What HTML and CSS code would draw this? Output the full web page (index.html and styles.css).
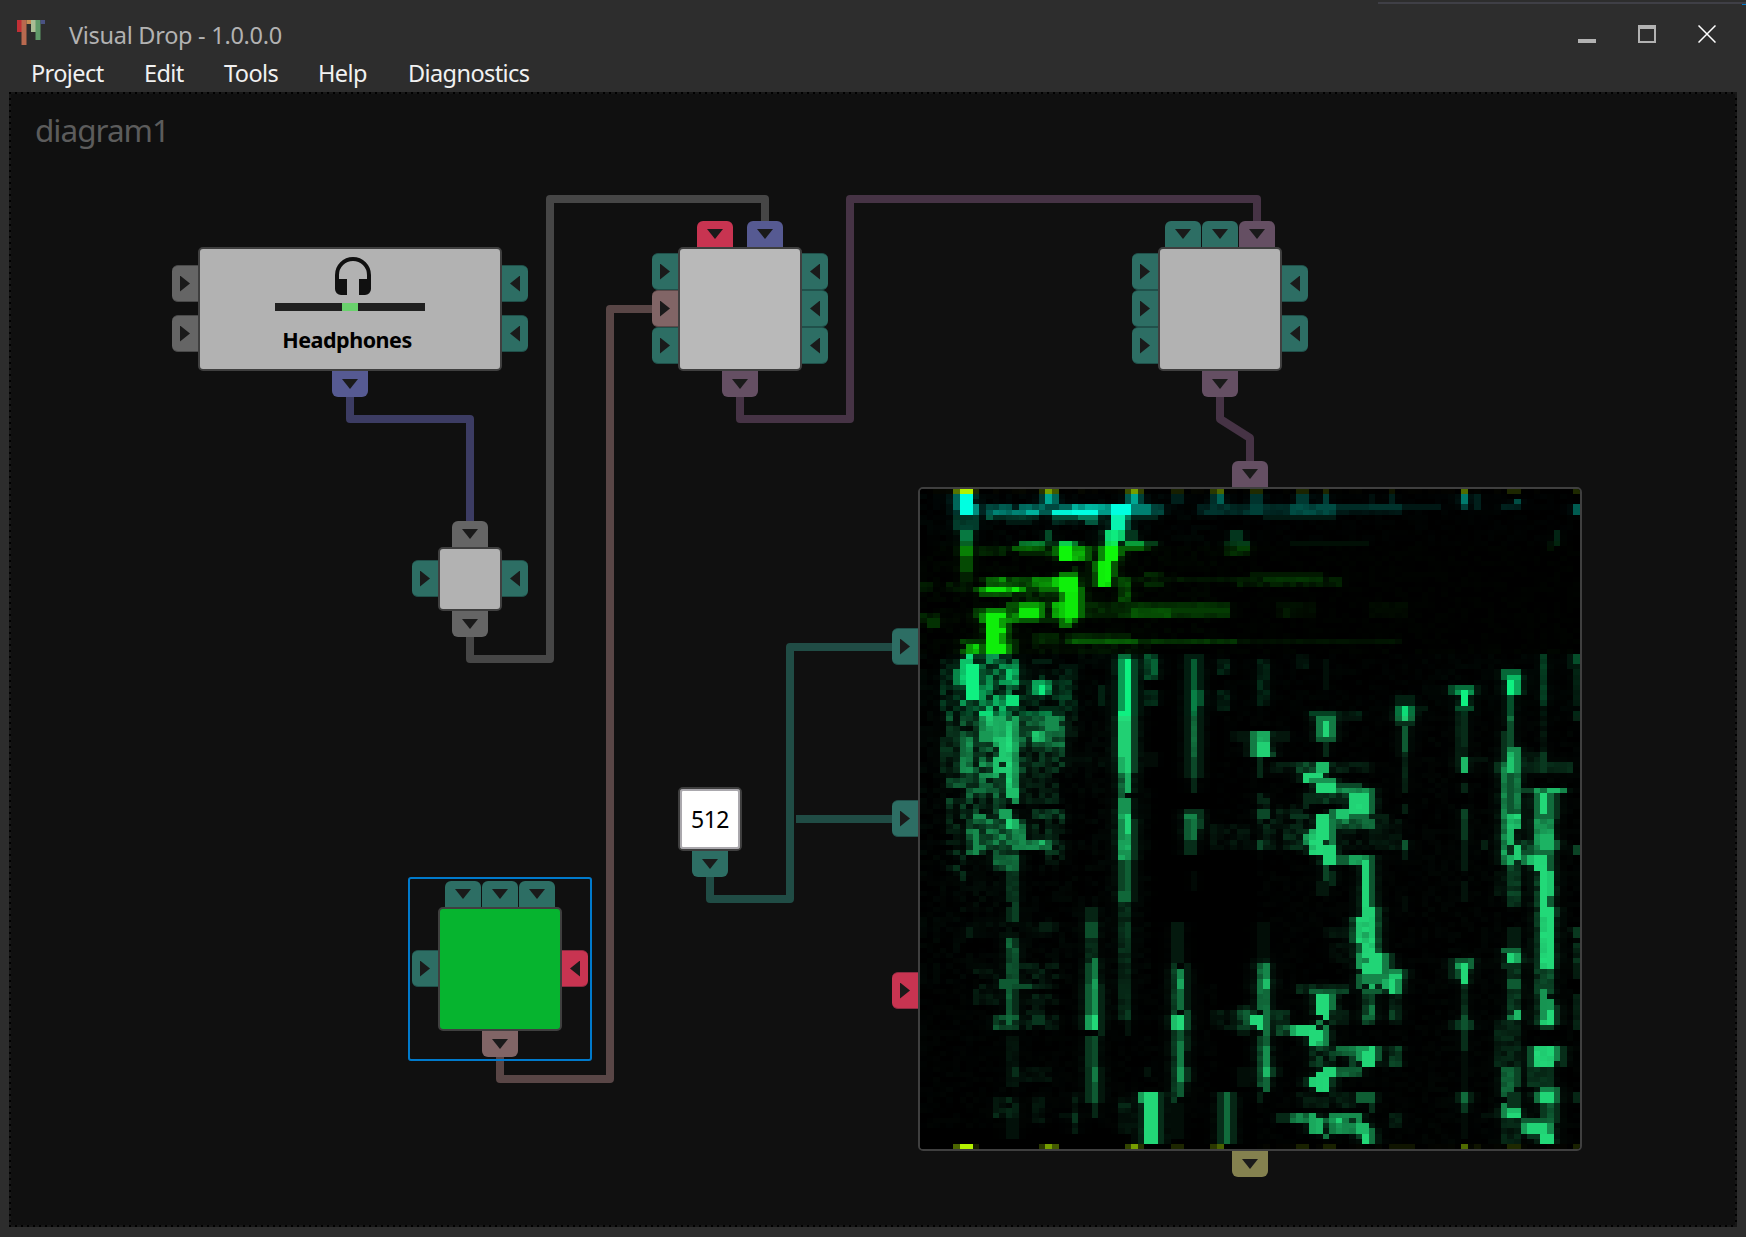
FILE: index.html
```html
<!DOCTYPE html>
<html lang="en">
<head>
<meta charset="utf-8">
<title>Visual Drop - 1.0.0.0</title>
<link rel="stylesheet" href="styles.css">
</head>
<body>
<div class="window">
  <div class="top-edge"></div>
  <header class="titlebar">
    <svg class="logo" width="28" height="26" viewBox="0 0 28 26">
      <rect x="0" y="0" width="5" height="12" fill="#c12f35"/>
      <rect x="4.5" y="0" width="5" height="25" fill="#b9694f"/>
      <rect x="9.500" y="0" width="4.500" height="4" fill="#c68b54"/>
      <rect x="14" y="0" width="5" height="12" fill="#a9bd94"/>
      <rect x="18.500" y="0" width="5" height="20" fill="#5f9a69"/>
      <rect x="23.500" y="0" width="4.500" height="4" fill="#4a5283"/>
    </svg>
    <span class="title">Visual Drop - 1.0.0.0</span>
    <div class="controls">
      <svg width="18" height="18"><rect y="14" width="18" height="4" fill="#b2b2b2"/></svg>
      <svg width="18" height="18"><path d="M0 0H18V18H0ZM2 4V16H16V4Z" fill="#b2b2b2" fill-rule="evenodd"/></svg>
      <svg width="18" height="18"><path d="M.5 .5L17.500 17.500M17.500 .5L.5 17.500" stroke="#fff" stroke-width="1.500"/></svg>
    </div>
  </header>
  <nav class="menu">
    <span>Project</span><span>Edit</span><span>Tools</span><span>Help</span><span class="wide">Diagnostics</span>
  </nav>
  <main class="board">
    <h1 class="name">diagram1</h1>
    <svg class="wires" width="1746" height="1237" viewBox="0 0 1746 1237">
      <path d="M350 395V419H470V523" stroke="#3c3c63"/>
      <path d="M470 635V659H550V199H765V223" stroke="#464646"/>
      <path d="M740 395V419H850V199H1257V223" stroke="#463345"/>
      <path d="M1220 395V419L1250 438V463" stroke="#463345"/>
      <path d="M500 1055V1079H610V309H654" stroke="#594646"/>
      <path d="M710 875V899H790V647H894M796 819H894" stroke="#204c45"/>
    </svg>

    <section class="node n-audio">
      <div class="rail left gap13"><i class="port grey"></i><i class="port grey"></i></div>
      <div class="rail right gap13"><i class="port"></i><i class="port"></i></div>
      <div class="rail bottom"><i class="port blue"></i></div>
      <div class="body audio">
        <svg class="phones" width="36" height="38" viewBox="0 0 36 38"><path d="M0 18A18 18 0 0 1 36 18V32A6 6 0 0 1 30 38H24V22H32V18A14 14 0 0 0 4 18V22H12V38H6A6 6 0 0 1 0 32Z" fill="#101010"/></svg>
        <div class="meter"><div class="level"></div></div>
        <span class="label">Headphones</span>
      </div>
    </section>

    <section class="node n-small">
      <div class="rail top"><i class="port grey"></i></div>
      <div class="rail left"><i class="port"></i></div>
      <div class="rail right"><i class="port"></i></div>
      <div class="rail bottom"><i class="port grey"></i></div>
      <div class="body"></div>
    </section>

    <section class="node n-mix">
      <div class="rail top gap14"><i class="port red"></i><i class="port blue"></i></div>
      <div class="rail left"><i class="port"></i><i class="port brown"></i><i class="port"></i></div>
      <div class="rail right"><i class="port"></i><i class="port"></i><i class="port"></i></div>
      <div class="rail bottom"><i class="port purple"></i></div>
      <div class="body light"></div>
    </section>

    <section class="node n-out">
      <div class="rail top"><i class="port"></i><i class="port"></i><i class="port purple"></i></div>
      <div class="rail left"><i class="port"></i><i class="port"></i><i class="port"></i></div>
      <div class="rail right gap13"><i class="port"></i><i class="port"></i></div>
      <div class="rail bottom"><i class="port purple"></i></div>
      <div class="body"></div>
    </section>

    <section class="node n-number">
      <div class="rail bottom"><i class="port"></i></div>
      <div class="body number">512</div>
    </section>

    <section class="node n-color">
      <div class="rail top"><i class="port"></i><i class="port"></i><i class="port"></i></div>
      <div class="rail left"><i class="port"></i></div>
      <div class="rail right"><i class="port red"></i></div>
      <div class="rail bottom"><i class="port brown"></i></div>
      <div class="body green"></div>
      <div class="selection"></div>
    </section>

    <section class="node n-view">
      <div class="rail top"><i class="port purple"></i></div>
      <div class="rail left gap135"><i class="port"></i><i class="port"></i><i class="port red"></i></div>
      <div class="rail bottom"><i class="port olive"></i></div>
      <div class="body view"><canvas id="bitmap" width="660" height="660"></canvas></div>
    </section>
  </main>
</div>
<script src="bitmap.js"></script>
</body>
</html>
```
FILE: styles.css
```css
* { box-sizing: border-box; }
body { margin: 0; background: #2d2d2d; font-family: "Noto Sans", "Open Sans", sans-serif; }
.window { position: relative; width: 1746px; height: 1237px; overflow: hidden; display: flex; flex-direction: column; background: #2d2d2d; }
.top-edge { position: absolute; top: 2px; right: 0; width: 368px; height: 2px; background: #3f3f46; }
.top-edge::after { content: ""; position: absolute; right: 0; top: 2px; width: 4px; height: 1px; background: #007acc; }
.titlebar { flex: none; height: 57px; display: flex; align-items: flex-start; padding: 20px 30px 0 17px; }
.logo { flex: none; }
.title { margin-left: 24px; color: #b2b2b2; font-size: 23.500px; line-height: 30px; letter-spacing: -0.280px; white-space: nowrap; }
.controls { margin-left: auto; padding-top: 5px; display: flex; gap: 42px; }
.menu { flex: none; height: 35px; display: grid; grid-template-columns: 113px 80px 94px 90px 200px; padding-left: 31px; color: #f1f1f1; font-size: 23.500px; line-height: 33px; letter-spacing: -0.600px; white-space: nowrap; }
.board { flex: none; position: relative; width: 1728px; height: 1135px; margin-left: 9px; background:
  repeating-linear-gradient(90deg, #000 0 2px, #161616 2px 6px) 0 0 / 100% 2px no-repeat,
  repeating-linear-gradient(90deg, #000 0 2px, #161616 2px 6px) 0 100% / 100% 2px no-repeat,
  repeating-linear-gradient(#000 0 2px, #161616 2px 6px) 0 0 / 2px 100% no-repeat,
  repeating-linear-gradient(#000 0 2px, #161616 2px 6px) 100% 0 / 2px 100% no-repeat, #101010; }
.name { margin: 0; padding: 15px 0 0 26px; color: #5c5c5c; font-size: 31.500px; font-weight: 400; line-height: 46px; letter-spacing: -1px; }
.wires { position: absolute; left: -9px; top: -92px; fill: none; stroke-width: 8; stroke-linejoin: round; }

.node { position: absolute; width: 124px; height: 124px; }
.n-audio { left: 189px; top: 155px; width: 304px; }
.n-small { left: 429px; top: 455px; width: 64px; height: 64px; }
.n-mix { left: 669px; top: 155px; }
.n-out { left: 1149px; top: 155px; }
.n-number { left: 669px; top: 695px; width: 64px; height: 64px; }
.n-color { left: 429px; top: 815px; }
.n-view { left: 909px; top: 395px; width: 664px; height: 664px; }
.body { width: 100%; height: 100%; border: 2px solid #3f3f3f; border-radius: 5px; background: #b2b2b2; overflow: hidden; }
.light { background: #b9b9b9; }
.green { background: #06b42f; }
.audio { display: flex; flex-direction: column; align-items: center; padding-top: 8px; }
.phones { flex: none; margin-left: 6px; }
.meter { width: 150px; height: 8px; margin-top: 8px; background: #202020; flex: none; }
.level { width: 16px; height: 8px; margin-left: 67px; background: #6ad26d; }
.label { margin: 14px 6px 0 0; color: #000; font-size: 21.500px; font-weight: 700; line-height: 30px; letter-spacing: -0.480px; }
.number { display: flex; align-items: center; justify-content: center; background: #fff; box-shadow: inset 0 0 0 2px #aaa8ad; font-size: 23px; letter-spacing: -0.500px; line-height: 30px; color: #000; }
.view { background: #000; }
.view canvas { display: block; }
.selection { position: absolute; left: -30px; top: -30px; width: 184px; height: 184px; border: 2px solid #007acc; border-radius: 3px; }

.rail { position: absolute; display: flex; justify-content: center; }
.left, .right { top: 0; bottom: 1px; width: 26px; flex-direction: column; }
.left { right: 100%; }
.right { left: 100%; }
.top, .bottom { left: 0; right: 0; height: 26px; gap: 1px; }
.top { bottom: 100%; }
.bottom { top: 100%; }
.gap13 { gap: 13px; }
.gap14 { gap: 14px; }
.gap135 { gap: 135px; }
.port { --c: #2d6e64; --edge: #20504a; flex: none; width: 36px; height: 26px; background: var(--c); display: flex; align-items: center; justify-content: center; }
.port::before { content: ""; width: 16px; height: 10px; background: #1a1a1a; clip-path: polygon(0 0, 100% 0, 50% 100%); }
.left .port, .right .port { width: 26px; height: 37px; border: solid var(--edge); border-width: 1px 0; }
.left .port::before, .right .port::before { width: 10px; height: 16px; clip-path: polygon(0 0, 100% 50%, 0 100%); }
.right .port::before { clip-path: polygon(100% 0, 0 50%, 100% 100%); }
.left .port { border-radius: 6px 0 0 6px; }
.right .port { border-radius: 0 6px 6px 0; }
.top .port { border-radius: 6px 6px 0 0; }
.bottom .port { border-radius: 0 0 6px 6px; }
.port.grey { --c: #656565; --edge: #494949; }
.port.blue { --c: #565a92; }
.port.red { --c: #c83451; --edge: #8b2a40; }
.port.brown { --c: #816566; --edge: #5c4949; }
.port.purple { --c: #654f63; }
.port.olive { --c: #84814f; }
```
FILE: bitmap.js
```js
// Spectral bitmap: 100 columns by 128 rows of intensities, tinted row by row.
const COLS = 100, ROWS = 128, CW = 6.6, CH = 660 / 128;
const cells = new Float32Array(COLS * ROWS);

function noise(x, y) {
  const s = Math.sin(x * 127.1 + y * 311.7) * 43758.5453;
  return s - Math.floor(s);
}

// Patches are "x1 y1 x2 y2 level jitter", in thirds of a pixel from the block's origin.
function block(ox, oy, data) {
  for (const line of data.trim().split(/[;\n]+/)) {
    const [x1, y1, x2, y2, level, jitter = 0] = line.trim().split(/\s+/).map(Number);
    const c1 = Math.max(0, Math.round((ox + x1 / 3) / CW));
    const c2 = Math.min(COLS, Math.round((ox + x2 / 3) / CW));
    const r1 = Math.max(0, Math.round((oy + y1 / 3) / CH));
    const r2 = Math.min(ROWS, Math.round((oy + y2 / 3) / CH));
    for (let r = r1; r < r2; r++) for (let c = c1; c < c2; c++) {
      cells[r * COLS + c] = Math.max(0, level + (noise(c, r) - 0.5) * jitter / 50);
    }
  }
}

function tint(r) {
  if (r === 0 || r === 127) return [190, 255, 0];
  if (r < 5) return [0, 255, 225];
  if (r < 8) return [8, 248, 180];
  if (r < 10) return [14, 242, 130];
  if (r < 11) return [14, 242, 90];
  if (r < 32) return [15, 245, 10];
  if (r < 44) return [15, 245, 132];
  return [35, 224, 124];
}

// faint haze
block(0, 0, `
0 0 900 480 .01 2
900 0 1980 480 .004 1
0 480 700 1480 .01 3
900 480 1500 1000 .004 1.5
1500 480 1980 1980 .008 2
1000 1000 1500 1980 .006 1.5
0 1480 900 1920 .006 1.5`);

// upper left
block(-20, -19, `
158 57 180 72 .45; 180 57 220 72 .95; 220 57 236 72 .15
418 57 436 72 .2; 436 57 458 72 .62; 458 57 474 72 .35
675 57 693 72 .3; 693 57 715 72 .62; 715 57 730 72 .25
810 57 850 72 .12; 930 57 950 72 .22; 950 57 970 72 .4
158 72 180 117 .4; 158 117 180 132 .2; 180 72 218 132 1; 218 102 236 132 .55
418 72 436 102 .22; 436 72 458 102 .65; 458 72 474 102 .4
675 72 693 102 .35; 693 72 715 102 .65; 715 72 730 102 .25
810 72 850 102 .12; 930 72 950 102 .18; 950 72 970 102 .38
258 102 340 117 .28 8; 356 102 436 117 .4 8; 436 102 474 117 .28; 474 102 514 117 .4; 514 102 635 117 .62 10
258 117 278 147 .35; 278 117 378 132 .45 8; 378 117 418 132 .7; 418 117 454 132 .35; 454 117 514 132 .95; 514 117 593 132 1; 593 117 635 132 .6
635 102 693 132 1; 693 102 750 132 .5; 750 102 800 132 .27 5; 693 132 770 147 .15; 890 102 1050 132 .15 6
278 132 420 147 .2 5; 454 132 535 147 .3; 535 132 593 147 .5; 555 147 593 163 .35; 320 147 400 163 .1; 454 147 540 163 .15 8
635 132 673 180 .98; 673 132 693 180 .5; 673 147 693 180 .32
160 132 236 180 .22 2; 180 163 218 180 .26; 180 180 218 210 .5; 180 210 218 225 .4; 180 225 218 258 .52; 180 258 218 302 .3; 180 302 218 335 .13
436 180 458 225 .3; 356 210 436 225 .5 5; 340 225 436 242 .38 6; 236 225 320 258 .13 5; 356 242 436 258 .14
436 210 474 258 .15 8; 474 210 514 225 .85; 514 210 540 225 .5; 474 225 514 273 1; 514 225 555 273 .7 8; 555 225 573 273 .35; 454 225 474 258 .42
613 180 635 225 .9; 635 180 658 225 .97; 658 180 673 210 .85; 673 180 715 210 .22; 675 210 735 225 .65; 675 225 735 240 .38; 735 210 775 225 .25; 735 225 755 240 .18; 658 210 673 225 .12
613 225 658 273 1; 595 225 613 273 .55; 595 273 613 347 .97; 613 273 635 335 1; 635 273 658 318 .35; 575 273 595 335 .42; 658 225 673 258 .4; 573 302 595 347 .3; 613 335 635 347 .9; 635 318 658 347 .16; 658 318 690 395 .26 8
510 288 535 302 .15
60 335 105 363 .1 3; 140 335 218 363 .08 4; 236 318 260 335 .14; 258 318 320 347 .45 15; 320 318 436 347 .3 8; 396 318 454 347 .55 7; 454 318 474 347 .82; 474 318 538 363 .98; 474 302 538 318 .52
220 347 240 363 .3; 240 347 258 363 .6; 258 347 316 363 .93; 316 347 340 363 .7; 340 347 356 363 .95; 356 347 378 363 .62; 378 347 418 363 .22; 418 347 474 363 .45
240 363 338 378 .33 4; 338 363 474 395 .12 9; 474 363 494 395 .52; 494 363 538 440 .95; 538 347 555 440 .42; 474 395 494 440 .82; 474 440 516 470 .45; 516 440 538 457 .4; 494 440 514 457 .75
320 395 356 440 .32 12; 356 410 418 440 .95; 356 395 418 410 .65; 418 395 436 440 .5; 454 395 474 440 .7 8; 356 440 418 457 .36; 418 440 474 457 .16; 555 395 680 440 .15 5
220 410 258 440 .28 12; 236 425 258 457 .55; 258 410 316 425 .55; 258 425 316 549 .97; 300 440 316 470 .65; 300 485 316 518 .65; 316 425 356 457 .48 10; 316 457 338 520 .28 8
60 425 120 457 .12 4; 80 440 120 473 .2; 120 440 220 457 .04 3
180 503 258 518 .26 8; 198 518 236 549 .75 15; 180 533 198 549 .35; 236 518 258 549 .38; 316 518 338 549 .5; 338 503 356 549 .16
394 490 480 518 .17 7; 490 503 1050 518 .2 4; 516 503 715 518 .36 3; 500 490 700 503 .14 4; 400 518 750 549 .06 4
735 302 800 347 .14 5; 690 318 1050 335 .08 3; 1020 318 1050 347 .12; 680 395 1000 440 .19 3; 690 410 810 440 .32 3; 810 410 990 425 .24
975 210 1050 255 .15 5; 1000 180 1040 225 .22
120 570 180 720 .12 12; 180 570 356 720 .32 22; 356 600 540 720 .11 11; 180 549 338 705 .38 26; 198 549 218 582 .9; 180 568 218 640 .82 5; 198 582 236 690 .98; 160 600 180 640 .55; 236 643 258 705 .58 10; 258 549 278 582 .6
316 582 356 643 .58 20; 320 597 338 628 .82; 316 675 356 705 .92; 278 675 300 705 .72; 300 705 340 720 .6; 396 628 454 675 .6 15; 418 643 436 675 .95; 474 628 514 705 .2 10
220 568 236 582 0; 258 582 278 597 0; 278 660 300 675 0; 340 660 356 675 .05; 300 643 316 660 .08
140 705 236 950 .24 20; 236 705 356 950 .45 32; 356 720 494 830 .36 22; 494 720 540 820 .07 8; 120 800 180 915 .14 10
180 800 218 915 .55 12; 236 720 278 735 .9; 258 735 316 810 .82 10; 236 782 278 810 .68; 338 750 356 1000 .7 10; 316 750 338 980 .93 8; 300 815 316 910 .9; 278 860 300 905 .86; 316 955 356 983 .85; 396 782 436 815 .82 8
356 830 494 915 .16 17; 430 740 474 780 .62; 494 850 620 900 .04 3; 356 915 474 1000 .09 10
198 925 316 985 .32 22; 140 985 320 1080 .16 18; 220 1030 258 1080 .62; 300 1015 340 1045 .72; 316 1045 356 1080 .85; 396 1015 494 1080 .2 14
340 660 356 675 0; 160 720 180 735 0; 198 765 220 780 0; 418 720 436 735 .5; 220 830 236 845 0; 300 875 316 890 0; 258 845 278 860 .1
400 560 454 582 .12; 474 582 535 597 .08; 595 645 615 705 .13
652 549 693 568 .45; 654 568 673 720 .63; 673 568 693 735 .98; 693 568 714 910 .28; 636 630 654 735 .09; 654 720 693 750 .98; 636 750 654 880 .12; 654 750 693 860 .93; 654 860 673 910 .78; 673 860 693 910 .93; 654 910 673 980 .42 7; 673 910 693 970 .78; 654 980 693 1030 .65; 654 1030 673 1080 .75; 673 1030 693 1080 .95
735 549 775 628 .28 8; 750 568 770 612 .4; 735 660 775 705 .15 5; 735 850 775 900 .05
852 549 912 720 .12; 870 568 890 660 .38; 870 660 890 720 .52; 890 660 912 705 .34; 852 720 912 920 .12; 870 720 890 860 .46 5; 870 860 890 925 .32; 870 925 890 970 .17; 852 1015 912 1080 .22; 852 1030 890 1080 .58
950 568 990 612 .12 5; 950 660 990 720 .1 5; 995 785 1050 820 .1 5`);

// upper right
block(320, -19, `
30 57 70 72 .17; 168 57 205 72 .14; 248 57 270 72 .15; 445 57 470 72 .08; 662 57 684 72 .42; 805 57 845 72 .15; 1003 57 1020 72 .16
30 72 70 102 .2; 168 72 205 102 .22; 248 72 270 102 .24; 390 72 405 102 .06; 445 72 470 102 .12; 662 72 684 102 .48; 662 102 684 117 .24; 705 72 722 117 .12; 780 102 845 125 .12 4; 820 87 842 102 .3; 1003 102 1020 132 .36
0 102 150 132 .16 5; 30 102 70 132 .25; 150 102 290 132 .28 4; 290 102 380 117 .17; 290 117 485 132 .08 2; 380 102 485 117 .2; 485 102 600 117 .09; 75 132 290 147 .1
0 210 30 240 .25; 150 210 380 225 .06; 945 180 965 225 .15; 920 210 940 235 .06
0 318 300 347 .1 4; 30 302 245 318 .1; 70 318 245 335 .2 3; 110 395 235 440 .05 2; 130 410 155 440 .1; 395 403 500 440 .04 1; 0 503 490 518 .07 2
50 568 90 705 .1 5; 168 549 205 600 .07 3; 250 570 270 660 .06; 50 630 70 660 .18
225 735 285 810 .55; 210 720 365 750 .1 5; 210 720 285 735 .26; 230 735 285 750 .55; 247 750 268 800 .95; 230 800 285 812 .4; 247 815 268 860 .18
30 785 48 860 .55; 48 785 92 860 .75; 48 797 70 830 .78; 48 815 88 860 .93; 92 785 150 815 .1; 92 840 108 860 .3; 48 860 70 920 .18; 0 785 30 815 .1
465 675 525 705 .13; 465 705 525 750 .46; 482 705 507 750 .9; 465 750 525 765 .2; 482 765 507 845 .4; 482 845 507 970 .16 4; 482 1000 507 1030 .14; 525 705 560 718 .1; 470 785 482 860 .05
645 643 705 675 .45; 625 643 645 670 .3; 645 660 700 675 .6; 662 660 684 705 .98; 645 705 700 720 .3; 645 720 684 860 .12 3; 662 720 684 830 .19; 662 860 684 905 .82; 645 860 662 890 .13; 684 860 740 875 .08; 662 935 684 965 .16; 662 1015 684 1080 .3; 705 643 722 670 .1
780 597 845 628 .42; 803 612 845 628 .75; 803 628 820 675 .98; 820 628 845 675 .68; 780 628 803 675 .12; 803 675 825 735 .32; 803 735 820 750 .5; 780 675 803 770 .06; 780 782 803 875 .22; 803 750 825 845 .34; 803 830 845 905 .62; 803 845 820 890 .82; 780 875 803 1080 .56 8; 803 860 820 905 .88; 765 875 780 905 .22; 845 850 925 875 .1 5; 845 875 1003 905 .17 4; 905 850 925 905 .25; 803 905 820 1030 .38; 820 905 845 1080 .48 10
900 549 918 700 .25 5; 900 700 918 840 .08 3; 985 549 1003 600 .09; 1003 549 1020 580 .32; 1003 580 1020 700 .13 3; 1003 720 1020 750 .16
845 950 885 965 .3; 882 950 985 970 .62 12; 882 965 945 1030 .48; 897 965 920 1030 .96; 920 950 960 970 .82; 945 970 965 1050 .22; 882 1030 945 1080 .48; 803 1030 845 1080 .92 6
90 875 400 915 .1 7; 165 875 230 905 .3 8; 230 875 268 905 .82; 190 905 250 935 .95; 210 920 285 935 .65; 228 935 285 965 .96; 285 935 365 950 .32; 285 950 400 970 .6 7; 325 965 385 1030 .94; 385 950 405 1040 .45; 190 965 230 1000 .18; 230 970 325 1000 .24 12; 345 1000 365 1015 .97
40 970 90 1080 .11 8; 100 1000 200 1080 .09 8; 50 1015 90 1050 .32; 228 1030 268 1080 .96; 285 1015 325 1060 .88; 268 1015 285 1080 .5; 325 1030 385 1060 .48; 385 1030 445 1060 .14; 208 1045 228 1080 .6; 150 1030 205 1060 .23`);

// lower left
block(-20, 331, `
140 0 200 180 .1 13; 198 0 258 105 .38 22; 220 25 238 105 .62; 258 0 378 90 .45 24; 278 90 356 150 .32 18; 396 0 494 130 .12 14; 378 60 458 85 .55 10; 418 60 436 78 .82
316 0 338 25 .96; 338 0 356 25 .8; 316 105 356 150 .5 8; 316 150 356 245 .22 4; 316 260 338 305 .18; 338 245 356 305 .28; 318 305 340 380 .48 8; 340 305 356 380 .23; 316 380 356 475 .32 8; 300 475 356 505 .4; 318 505 340 600 .44 6; 340 505 356 600 .2; 278 582 356 628 .28 16; 318 582 338 612 .48; 316 640 356 800 .08 2; 330 738 356 765 .2
356 430 474 505 .08 9; 338 490 396 505 .35; 220 430 300 550 .06 6; 356 520 474 625 .07 9; 396 582 436 612 .24; 160 305 480 350 .04 4; 410 305 450 335 .13; 198 320 220 355 .12; 170 180 310 280 .03 3; 300 270 316 290 0; 396 105 436 135 0
356 738 454 790 .06 4; 278 830 356 890 .12 8; 316 845 338 860 0; 396 830 436 905 .07 4; 318 890 356 950 .07
654 0 673 60 .62; 673 0 693 45 .95; 673 45 693 120 .72; 654 60 693 120 .72 8; 693 0 714 120 .22; 654 120 673 210 .3; 673 120 693 210 .42; 654 210 693 245 .46; 654 245 693 430 .18 5; 673 305 693 350 .27; 654 430 693 600 .15 4; 673 570 693 600 .26; 673 600 693 640 .08; 693 120 714 240 .1
850 0 912 25 .28; 852 0 873 60 .4; 873 0 893 55 .52; 852 60 893 105 .2; 873 145 893 220 .04; 940 20 1050 90 .06 5; 345 25 378 90 .55 10
555 258 593 305 .16; 555 305 593 350 .35; 555 350 593 430 .18 4; 573 415 593 490 .55; 555 430 573 490 .32; 573 475 593 505 .7; 555 490 573 580 .42; 573 505 593 582 .65; 555 582 573 628 .7; 573 582 597 628 .96; 595 490 614 640 .16; 555 640 573 740 .25; 573 640 593 740 .34; 555 740 573 845 .22; 573 740 593 785 .54; 573 785 593 845 .4; 573 845 593 895 .17; 593 738 610 845 .1
516 820 540 935 .1 4; 520 875 538 912 .23; 475 875 516 890 .07; 655 830 712 935 .06 5; 660 845 693 865 .18
810 305 850 430 .11; 810 430 832 580 .26 5; 832 445 852 475 .6; 832 475 852 505 .74; 832 505 852 567 .48; 852 430 872 640 .12; 852 567 872 628 .32; 810 582 832 628 .85; 832 582 852 628 .97; 810 628 832 845 .22 5; 832 628 852 660 .38; 832 660 852 738 .55; 832 738 852 785 .68; 832 785 852 830 .4; 852 738 872 785 .23; 852 650 872 690 .16; 810 845 852 950 .06
714 815 732 845 .7; 714 845 732 967 .15; 732 815 774 967 .96; 774 815 794 967 .2; 734 738 755 770 .08
950 815 968 967 .2; 968 815 993 967 .48; 990 815 1010 967 .17
930 567 1010 628 .08 6; 1010 555 1050 640 .14 6; 1010 567 1050 597 .38; 1030 597 1050 628 .4; 1010 738 1050 800 .06
158 967 180 990 .4; 180 967 220 990 .95; 220 967 236 990 .12; 418 967 436 990 .22; 436 967 458 990 .62; 458 967 474 990 .35; 675 967 693 990 .27; 693 967 715 990 .62; 715 967 730 990 .2; 810 967 850 990 .15; 930 967 950 990 .22; 950 967 970 990 .38`);

// lower right
block(320, 331, `
40 0 100 90 .1 8; 120 0 225 90 .12 10; 50 60 70 90 .32; 285 0 480 90 .07 6; 285 0 400 25 .38 12; 303 0 325 12 .6; 190 40 230 78 .7 15; 205 25 230 105 .88 10; 228 0 268 105 .97; 268 0 285 100 .55; 248 57 268 72 .05; 248 75 285 132 .95
285 105 325 132 .42; 325 105 385 132 .68 8; 365 120 385 258 .95; 385 105 405 258 .38; 247 132 268 195 .3; 268 145 285 195 .18; 230 175 268 230 .1
365 258 405 290 .93; 405 258 425 290 .3; 345 288 385 385 .94; 385 288 405 385 .9; 365 305 385 320 .85; 365 335 385 350 .74; 405 288 425 395 .32 6; 325 288 347 385 .28 8; 345 305 365 350 .88; 345 365 365 400 .38; 365 350 405 400 .88 8; 240 320 325 350 .08 4; 265 375 345 425 .07 6
347 400 365 445 .68; 365 400 425 458 .95; 365 415 385 430 .6; 425 400 445 458 .55; 445 400 465 445 .2; 365 458 445 490 .6; 347 458 365 505 .42; 445 445 487 475 .62; 445 458 485 475 .9; 445 475 467 520 .96; 467 475 487 520 .65; 425 475 445 505 .78; 385 490 405 505 .82; 365 505 425 520 .42; 487 445 507 470 .23; 365 520 405 610 .25 8; 385 550 405 595 .55; 365 582 405 600 .45; 445 530 485 612 .12 5; 447 570 467 600 .3
30 415 108 505 .07 5; 50 430 70 505 .46 6; 70 430 90 490 .6; 70 475 90 505 .85; 50 505 90 567 .5 7; 0 567 50 628 .3 15; 30 582 50 615 .95; 50 582 70 628 .96; 70 567 90 640 .5; 50 640 70 800 .32 5; 70 640 90 675 .42; 70 675 90 738 .64; 70 738 90 770 .83; 70 770 90 812 .45; 90 738 108 770 .26; 90 567 145 615 .18 9; 50 815 70 845 .13; 50 310 85 415 .06
165 490 330 530 .12 8; 205 508 325 520 .38 10; 228 520 268 582 .97; 268 520 285 582 .52; 248 580 268 595 .96; 268 567 325 612 .15 7; 228 595 248 615 .55
110 612 168 645 .33 18; 150 615 210 645 .75; 168 615 228 645 .94; 208 628 248 675 .97; 248 612 268 675 .58; 228 660 248 690 .8; 248 675 268 690 .96; 268 675 350 690 .5 7; 208 675 285 738 .2 12; 248 708 268 722 0; 268 690 350 710 .38 8; 345 690 365 725 .68; 365 675 405 738 .95; 347 675 385 690 .7; 405 675 425 720 .38; 325 710 350 738 .28; 447 675 485 738 .24 10
248 738 285 775 .94; 285 738 365 765 .42 10; 228 750 248 815 .95; 208 770 228 800 .93; 248 770 268 815 .96; 268 770 285 800 .22; 190 765 208 800 .18; 248 815 268 860 .3; 160 815 340 870 .09 7; 350 815 405 845 .42; 385 845 405 875 .2
100 877 150 910 .18; 150 877 208 905 .52 12; 208 877 230 940 .75; 228 890 248 940 .8; 248 877 268 895 .05; 248 910 268 938 .05; 248 895 268 910 .45; 248 938 268 953 .52; 268 877 345 938 .62 8; 285 890 308 912 .93; 328 877 365 905 .62; 328 890 348 905 .22; 345 910 385 938 .82; 365 938 385 967 .96; 385 920 405 967 .5; 345 938 365 953 .28; 445 875 480 930 .12 5
485 57 507 90 .38; 485 90 507 120 .12; 485 230 507 280 .05; 662 0 684 60 .25; 662 60 684 150 .12; 662 180 684 240 .08; 720 60 740 85 .14
625 415 645 475 .15; 645 415 705 445 .38; 645 430 662 445 .7; 645 445 662 475 .35; 662 430 684 490 .96; 684 415 705 445 .45; 684 475 690 490 .3; 662 490 684 580 .18 4; 645 597 700 628 .24; 662 582 684 630 .37; 625 605 645 628 .1; 662 630 684 690 .2; 662 690 684 815 .06; 645 815 700 845 .14; 662 815 684 845 .48; 662 845 684 875 .24; 660 875 684 960 .05
780 0 803 135 .6 20; 803 0 845 28 .82 10; 803 28 820 70 .82; 820 70 845 115 .92; 803 100 820 135 .78; 845 60 885 105 .28 10; 845 105 862 132 .55; 862 105 885 132 .85; 885 105 918 150 .96; 882 0 945 105 .65 10; 897 40 940 85 .8; 882 85 945 105 .48; 945 60 960 90 .4; 1003 70 1020 105 .3
803 135 845 265 .25 8; 765 150 803 230 .07 4; 803 320 845 380 .12; 780 380 845 400 .46; 803 395 845 430 .76; 803 400 825 430 .95; 780 430 845 445 .2; 803 445 845 580 .22 7; 803 480 845 505 .4; 820 567 845 600 .82; 803 582 820 612 .55; 765 600 845 740 .14 6; 803 738 845 800 .3; 780 738 820 830 .44 7; 803 815 845 875 .22; 780 845 803 890 .6; 803 860 845 890 .85; 803 875 845 895 .96; 820 890 845 920 .72; 803 895 820 910 .55; 780 895 845 967 .13 6
882 150 900 620 .22 9; 900 135 918 290 .97; 918 105 940 150 .4; 918 150 940 230 .9; 918 230 940 258 .4; 918 258 940 440 .97; 900 290 918 440 .93 6; 940 258 960 290 .24; 900 440 940 520 .33 8; 900 505 918 612 .66; 918 535 940 580 .67; 918 567 940 612 .97; 900 595 918 612 .9; 940 555 958 612 .23; 900 612 940 630 .26
862 675 882 738 .35; 882 675 945 738 .94 4; 945 675 962 720 .58; 960 675 980 735 .2; 862 738 940 800 .2 5; 882 815 900 845 .5; 900 800 945 815 .58; 900 815 940 845 .95; 945 800 962 850 .45; 918 845 945 905 .36 7; 945 845 960 905 .2; 900 845 918 905 .25; 845 895 918 910 .4; 845 910 862 938 .7; 862 910 918 938 .94; 918 905 940 938 .62; 900 938 940 967 .97; 862 938 900 950 .24
1003 320 1020 350 .25; 985 325 1003 345 .08; 1003 375 1020 480 .16 8; 1003 530 1020 630 .13 4; 1003 815 1020 845 .17; 720 875 765 895 .07
168 967 205 990 .13; 248 967 285 990 .13; 445 967 520 990 .08; 662 967 684 990 .42; 705 967 722 990 .08; 805 967 845 990 .16; 1003 967 1020 990 .13`);

function leaked(r, c) {
  const at = k => (k < 0 || k >= COLS ? 0 : cells[r * COLS + k]);
  if (r < 1 || r > 126) return at(c);
  const near = (at(c - 1) + at(c + 1)) * 0.09;
  const far = (at(c - 2) + at(c + 2)) * 0.03;
  const v = at(c);
  return Math.max(v, (near + far) * (0.6 + 0.8 * noise(c + 7, r)));
}

const ctx = document.getElementById("bitmap").getContext("2d");
ctx.fillStyle = "#000";
ctx.fillRect(0, 0, 660, 660);
for (let r = 0; r < ROWS; r++) {
  const y = Math.round(r * CH), h = Math.round((r + 1) * CH) - y, t = tint(r);
  for (let c = 0; c < COLS; c++) {
    const x = Math.round(c * CW), w = Math.round((c + 1) * CW) - x;
    const v = Math.min(1, leaked(r, c));
    ctx.fillStyle = `rgb(${t.map(k => Math.round(k * v)).join(",")})`;
    ctx.fillRect(x, y, w, h);
  }
}
```
